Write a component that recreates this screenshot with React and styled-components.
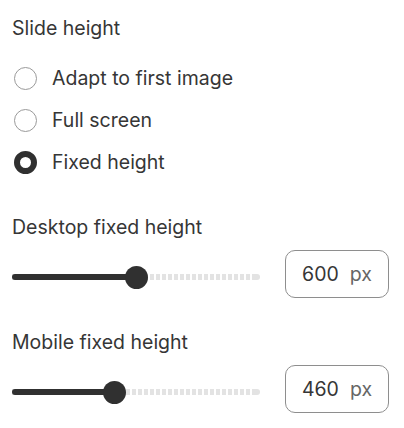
import React from 'react';
import styled, {createGlobalStyle} from 'styled-components';

const GlobalStyle = createGlobalStyle`
  body {
    margin: 0;
    background: #fff;
    font-family: Inter, 'Noto Sans', sans-serif;
    color: #363636;
  }
`

const Panel = styled.div`
  padding: 16px 0 0 12px;
  width: 392px;
`

const Title = styled.div`
  font-size: 19.5px;
  line-height: 24px;
`

const RadioList = styled.div`
  display: flex;
  flex-direction: column;
  margin-top: 17px;
`

const RadioRow = styled.label`
  display: flex;
  align-items: center;
  gap: 15px;
  height: 42px;
  font-size: 19.5px;
  cursor: pointer;
`

const Circle = styled.span`
  box-sizing: border-box;
  width: 23px;
  height: 23px;
  margin-left: 2px;
  border-radius: 50%;
  border: ${props => props.checked ? '6.5px solid #303030' : '1px solid #9a9a9a'};
  background: #fff;
`

const Field = styled.div`
  margin-top: 32px;
`

const SliderRow = styled.div`
  display: flex;
  align-items: center;
  gap: 25px;
  margin-top: 11px;
`

const Track = styled.div`
  position: relative;
  width: 248px;
  height: 48px;
  top: 3px;
`

const Rest = styled.div`
  position: absolute;
  left: 0;
  right: 7px;
  top: 21px;
  height: 6px;
  background: repeating-linear-gradient(to right, #e3e3e3 0 4px, transparent 4px 6px);
  &::after {
    content: '';
    position: absolute;
    right: -7px;
    top: 0;
    width: 7px;
    height: 6px;
    border-radius: 0 3px 3px 0;
    background: #e3e3e3;
  }
`

const Fill = styled.div`
  position: absolute;
  left: 0;
  top: 21px;
  height: 6px;
  border-radius: 3px;
  background: #303030;
`

const Thumb = styled.div`
  position: absolute;
  top: 12.5px;
  width: 23px;
  height: 23px;
  margin-left: -11.5px;
  border-radius: 50%;
  background: #303030;
`

const NumberBox = styled.div`
  box-sizing: border-box;
  width: 104px;
  height: 48px;
  border: 1px solid #8e8e8e;
  border-radius: 10px;
  display: flex;
  align-items: center;
  justify-content: center;
  gap: 11px;
  font-size: 19.5px;
`

const Unit = styled.span`
  color: #666;
`

function Slider({value, max}) {
  const center = 11.5 + (value / max) * (248 - 23);
  return (
    <Track>
      <Rest />
      <Fill style={{width: center}} />
      <Thumb style={{left: center}} />
    </Track>
  );
}

function HeightField({label, value, max}) {
  return (
    <Field>
      <Title>{label}</Title>
      <SliderRow>
        <Slider value={value} max={max} />
        <NumberBox>
          <span>{value}</span>
          <Unit>px</Unit>
        </NumberBox>
      </SliderRow>
    </Field>
  );
}

const options = ['Adapt to first image', 'Full screen', 'Fixed height'];

export default function App() {
  const selected = 'Fixed height';
  return (
    <Panel>
      <GlobalStyle />
      <Title>Slide height</Title>
      <RadioList>
        {options.map(opt => (
          <RadioRow key={opt}>
            <Circle checked={opt === selected} />
            {opt}
          </RadioRow>
        ))}
      </RadioList>
      <HeightField label="Desktop fixed height" value={600} max={1200} />
      <HeightField label="Mobile fixed height" value={460} max={1140} />
    </Panel>
  );
}
